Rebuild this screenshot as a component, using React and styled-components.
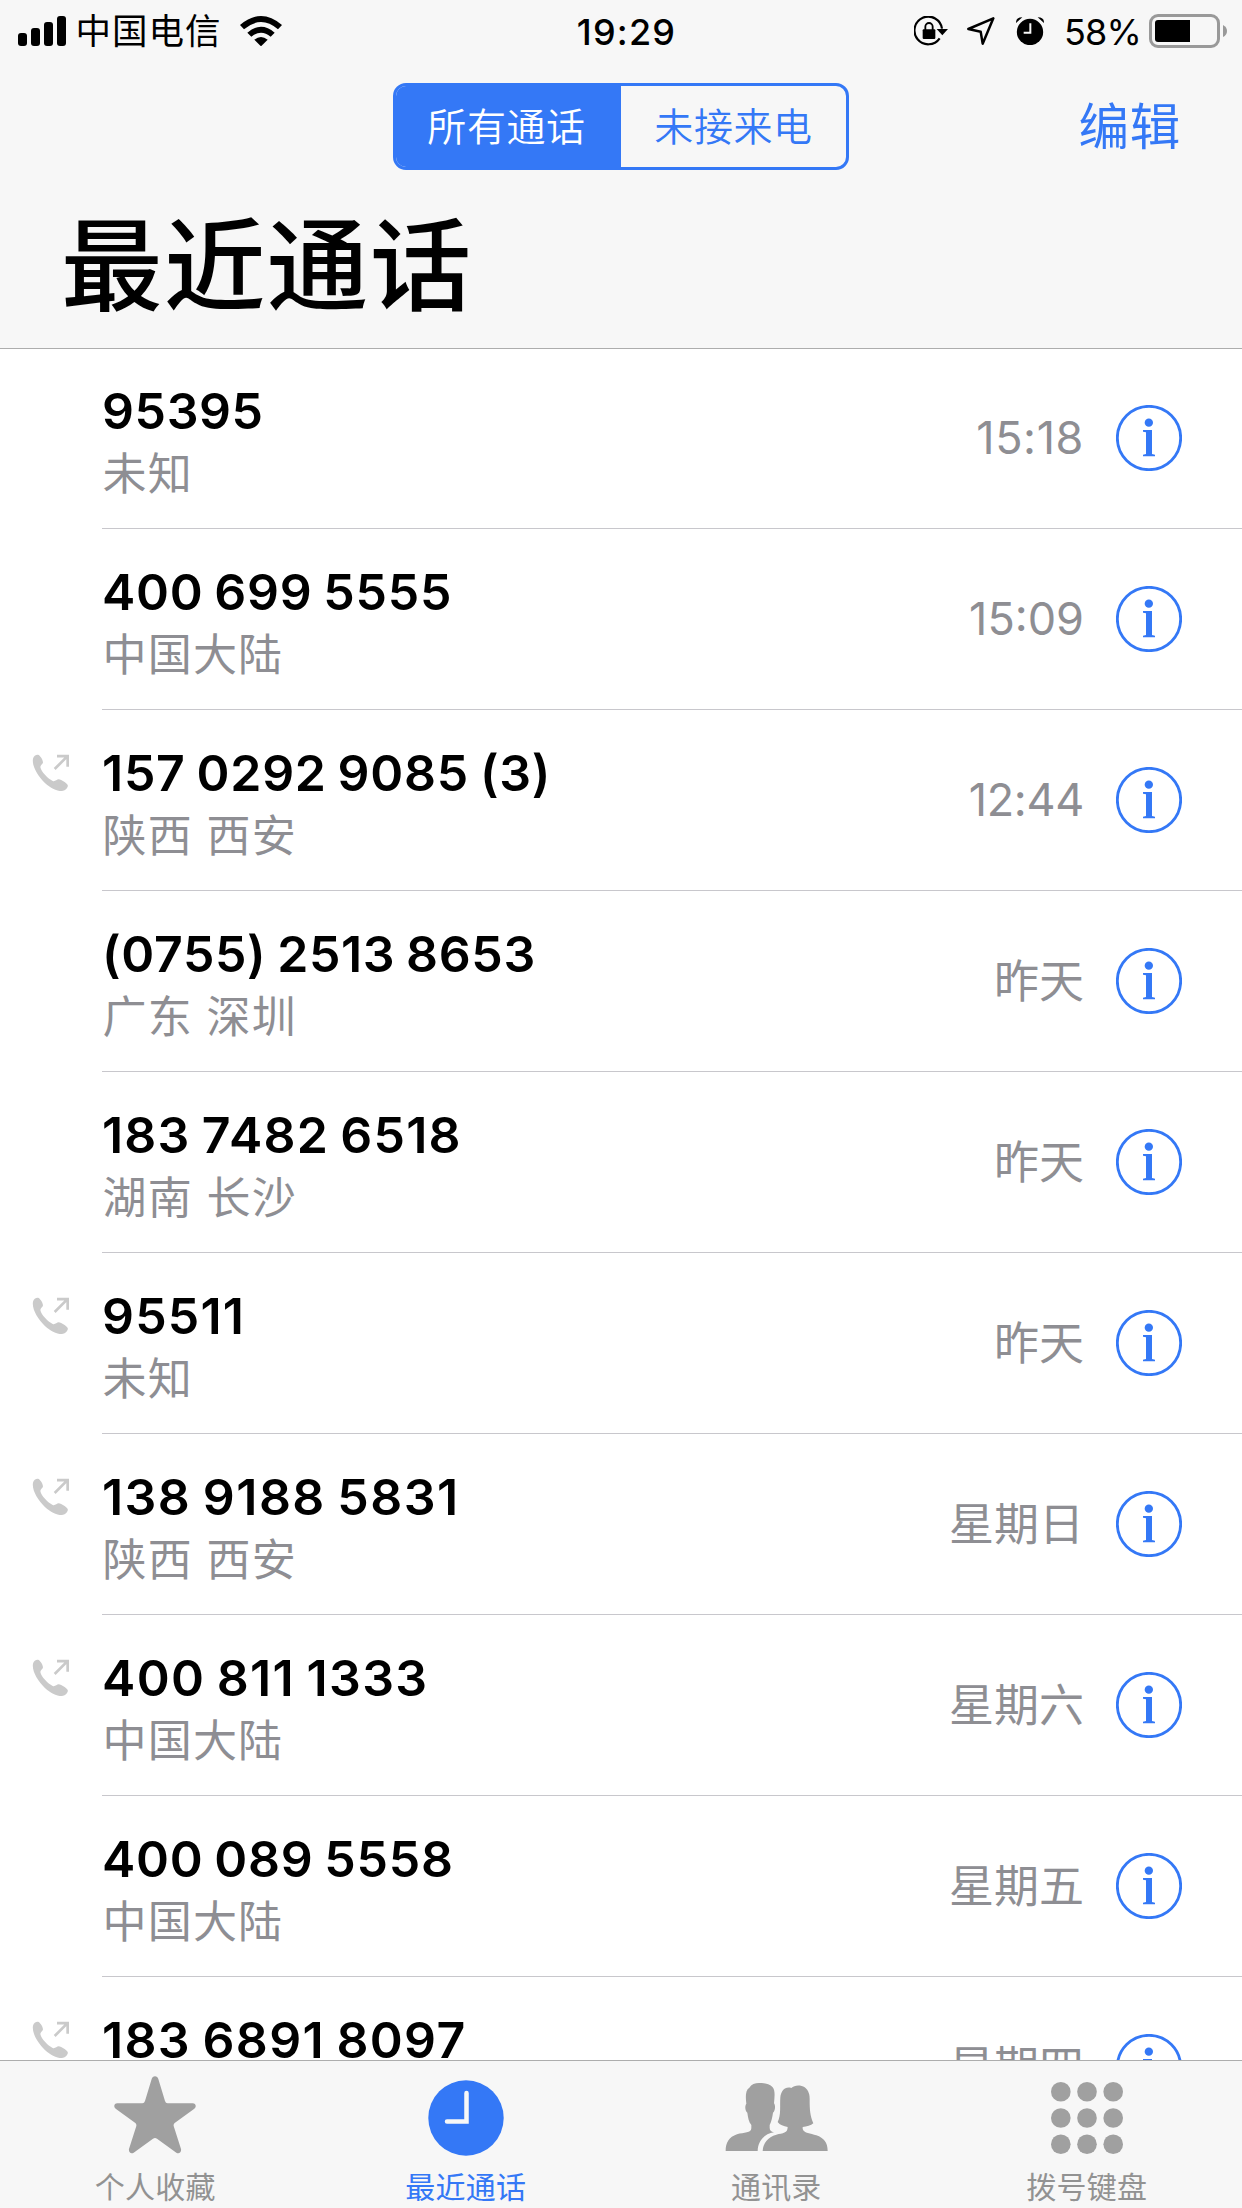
import React from "react";
import styled, { createGlobalStyle, css } from "styled-components";

const BLUE = "#3478f6";
const GREY = "#8e8e93";
const TAB_GREY = "#a0a0a0";
const BAR = "#f7f7f7";

const GlobalStyle = createGlobalStyle`
  * { box-sizing: border-box; }
  body {
    margin: 0;
    background: #fff;
    color: #000;
    font-family: Inter, "Noto Sans CJK SC", sans-serif;
  }
  svg { display: block; flex: none; }
  button {
    font: inherit;
    color: inherit;
    background: none;
    border: 0;
    padding: 0;
    margin: 0;
  }
`;

const Screen = styled.div`
  width: 1242px;
  height: 2208px;
  display: flex;
  flex-direction: column;
  overflow: hidden;
`;

const Header = styled.header`
  flex: none;
  height: 349px;
  background: ${BAR};
  border-bottom: 1px solid #adadad;
  display: flex;
  flex-direction: column;
`;

const StatusBar = styled.div`
  height: 60px;
  display: grid;
  grid-template-columns: 1fr auto 1fr;
  align-items: center;
  padding: 0 15px 0 18px;
`;

const StatusLeft = styled.div`
  display: flex;
  align-items: center;
  height: 60px;
`;

const StatusRight = styled.div`
  display: flex;
  align-items: center;
  justify-content: flex-end;
  height: 60px;
`;

const Carrier = styled.span`
  font-size: 35.5px;
  line-height: 60px;
  letter-spacing: 1px;
  margin: 2px 18.5px 0 9.5px;
`;

const Clock = styled.span`
  font-size: 36px;
  font-weight: 500;
  line-height: 60px;
  letter-spacing: 1.2px;
  margin-left: 8px;
  margin-top: 2px;
`;

const Percent = styled.span`
  font-size: 36px;
  line-height: 60px;
  letter-spacing: -0.8px;
  margin: 2px 8px 0 20px;
`;

const LocationSlot = styled.span`
  margin: 0 21px 0 19px;
`;

const NavBar = styled.nav`
  height: 132px;
  display: grid;
  grid-template-columns: 1fr auto 1fr;
  align-items: center;
  padding: 0 63px;
`;

const Segments = styled.div`
  grid-column: 2;
  width: 456px;
  height: 87px;
  display: flex;
  border: 3px solid ${BLUE};
  border-radius: 13px;
  overflow: hidden;
`;

const Segment = styled.button`
  flex: 0 0 225px;
  font-size: 39px;
  line-height: 81px;
  letter-spacing: 0.6px;
  color: ${BLUE};
  font-weight: 350;
  ${(p) =>
    p.$active &&
    css`
      padding-right: 4px;
      background: ${BLUE};
      color: #fff;
    `}
`;

const EditButton = styled.button`
  justify-self: end;
  font-size: 50.5px;
  line-height: 80px;
  letter-spacing: 0.8px;
  color: ${BLUE};
  padding-top: 2px;
  margin-right: -2px;
`;

const Title = styled.h1`
  margin: 0;
  padding: 9px 0 0 61px;
  font-size: 101.5px;
  line-height: 130px;
  letter-spacing: 1.4px;
  font-weight: 500;
`;

const CallList = styled.ul`
  flex: 1;
  min-height: 0;
  overflow: hidden;
  list-style: none;
  margin: -1px 0 0;
  padding: 0;
`;

const Row = styled.li`
  height: 181px;
  display: flex;
`;

const Gutter = styled.div`
  width: 102px;
  padding: 44px 0 0 32px;
`;

const RowBody = styled.div`
  flex: 1;
  display: flex;
  align-items: center;
  padding-right: 60px;
  border-bottom: 1px solid #c8c7cc;
`;

const Entry = styled.div`
  flex: 1;
  height: 180px;
  padding-top: 33px;
`;

const Number = styled.div`
  font-size: 50px;
  line-height: 60px;
  font-weight: 600;
  white-space: pre;
  word-spacing: -2.5px;
  letter-spacing: ${(p) => p.$track || 0}px;
`;

const Place = styled.div`
  font-size: 44px;
  line-height: 60px;
  letter-spacing: 1.2px;
  color: ${GREY};
  padding-left: 0.5px;
  margin-top: 3px;
`;

const When = styled.div`
  font-size: 45px;
  line-height: 60px;
  color: ${GREY};
  margin-right: 32px;
  padding-top: ${(p) => (p.$clock ? 0 : 2)}px;
  letter-spacing: ${(p) => p.$track || 0}px;
`;

const TabBar = styled.footer`
  flex: none;
  height: 148px;
  display: grid;
  grid-template-columns: repeat(4, 1fr);
  background: ${BAR};
  border-top: 1px solid #adadad;
`;

const Tab = styled.button`
  display: flex;
  flex-direction: column;
  align-items: center;
  color: ${(p) => (p.$active ? BLUE : TAB_GREY)};
`;

const TabIcon = styled.span`
  height: 106px;
  display: flex;
  align-items: flex-start;
  padding-top: ${(p) => p.$top}px;
`;

const TabLabel = styled.span`
  font-size: 30px;
  line-height: 40px;
  letter-spacing: 0.2px;
  color: ${(p) => (p.$active ? BLUE : "#929292")};
`;

const SignalIcon = () => (
  <svg width="48" height="30" viewBox="0 0 48 30">
    <rect x="0" y="17" width="9" height="13" rx="3" />
    <rect x="13" y="12" width="9" height="18" rx="3" />
    <rect x="26" y="6" width="9" height="24" rx="3" />
    <rect x="39" y="0" width="9" height="30" rx="3" />
  </svg>
);

const WifiIcon = () => (
  <svg width="42" height="30" viewBox="0 0 126 90">
    <path d="M0 27 Q63 -27 126 27 L114 40 Q63 -4 12 40 Z" />
    <path d="M22 50 Q63 15 104 50 L92 62 Q63 38 34 62 Z" />
    <path d="M43 71 Q63 55 83 71 L63 91 Z" />
  </svg>
);

const LockIcon = () => (
  <svg width="34" height="30" viewBox="42 30 102 90">
    <path
      d="M119 97 A41.5 41.5 0 1 1 126 68"
      fill="none"
      stroke="#000"
      strokeWidth="6.5"
    />
    <path d="M110 69 H144 L127 88 Z" />
    <rect x="68" y="70" width="38" height="29" rx="3" />
    <path
      d="M76 72 V62 a11 11 0 0 1 22 0 V72"
      fill="none"
      stroke="#000"
      strokeWidth="5.5"
    />
  </svg>
);

const LocationIcon = () => (
  <svg width="28" height="28" viewBox="202 35 84 84">
    <path
      d="M281 39 L206 71 L243 79 L249 115 Z"
      fill="none"
      stroke="#000"
      strokeWidth="7.5"
      strokeLinejoin="round"
    />
  </svg>
);

const AlarmIcon = () => (
  <svg width="28" height="28" viewBox="348 33 84 84">
    <circle cx="390" cy="78" r="39.5" />
    <path d="M348 51 Q347 34 367 34 Z M432 51 Q433 34 413 34 Z" />
    <path
      d="M391 52 V80 H371"
      fill="none"
      stroke={BAR}
      strokeWidth="6"
    />
  </svg>
);

const BatteryIcon = () => (
  <svg width="78" height="34" viewBox="0 0 78 34">
    <rect
      x="1.5"
      y="1.5"
      width="68"
      height="31"
      rx="7.5"
      fill="none"
      stroke="#999"
      strokeWidth="3"
    />
    <path d="M41 6 H9 a3 3 0 0 0 -3 3 V25 a3 3 0 0 0 3 3 H41 Z" />
    <path d="M74 11 Q78 13 78 17 Q78 21 74 23 Z" fill="#999" />
  </svg>
);

const OutgoingIcon = () => (
  <svg width="38" height="38" viewBox="37 28 114 114" fill="#cacaca">
    <path d="M40 42 C42 34 50 29 57 31 C63 35 70 46 70 53 C70 59 62 61 62 67 C65 82 84 101 99 109 C106 112 111 104 117 104 C126 106 140 114 144 121 C147 128 136 139 127 139 C110 139 90 128 75 114 C55 94 36 65 40 42 Z" />
    <path
      d="M105 73 L142 36 M112 34.500 H144 V66"
      fill="none"
      stroke="#cacaca"
      strokeWidth="8"
    />
  </svg>
);

const InfoIcon = () => (
  <svg width="66" height="66" viewBox="0 0 198 198" fill={BLUE}>
    <circle
      cx="99"
      cy="99"
      r="95"
      fill="none"
      stroke={BLUE}
      strokeWidth="8.5"
    />
    <circle cx="98.500" cy="53" r="12.500" />
    <path d="M81 75 H108 V147 L117 149 V154 H81 V149 L90 147 V82 L81 80 Z" />
  </svg>
);

const StarIcon = () => (
  <svg width="82" height="78" viewBox="27 32 246 234" fill="currentColor">
    <path d="M150 33 C155 33 158 36 160 41 L180 107 Q182 114 188 114 H263 C273 114 275 125 268 130 L209 173 Q205 176 206 182 L228 251 C230 261 222 267 214 262 L156 220 Q150 216 144 220 L86 262 C78 267 70 261 72 251 L94 182 Q95 176 91 173 L32 130 C25 125 27 114 37 114 H112 Q118 114 120 107 L140 41 C142 36 145 33 150 33 Z" />
  </svg>
);

const ClockIcon = () => (
  <svg width="76" height="76" viewBox="0 0 76 76">
    <circle cx="38" cy="38" r="37.700" fill="currentColor" />
    <path
      d="M38.500 13 V41.500 H19"
      fill="none"
      stroke={BAR}
      strokeWidth="4.500"
      strokeLinecap="round"
    />
  </svg>
);

const PeopleIcon = () => (
  <svg width="104" height="68" viewBox="30 39 312 204" fill="currentColor">
    <path d="M35 243 C35 218 45 201 69 193 C90 187 112 189 112 175 V165 C104 156 102 142 100 128 C93 123 92 108 97 101 C95 84 93 61 106 53 C112 43 123 39 135 39 C153 39 168 42 176 52 C185 63 181 84 180 100 C185 107 184 122 177 128 C175 142 172 155 167 165 V173 C167 181 171 184 180 187 C155 190 132 210 131 243 Z" />
    <path d="M146 243 C147 220 161 201 187 194 C207 189 221 190 221 171 C209 169 197 165 191 156 C202 136 197 105 199 82 C201 62 214 48 232 54 C241 45 260 44 272 52 C284 61 288 75 287 91 C287 117 288 138 298 160 C291 167 278 170 266 171 V177 C270 190 290 190 307 196 C330 204 341 218 341 243 Z" />
  </svg>
);

const KeypadIcon = () => (
  <svg width="72" height="72" viewBox="0 0 72 72" fill="currentColor">
    {[9.8, 36, 62.2].map((y) =>
      [9.8, 36, 62.2].map((x) => (
        <circle key={`${x}-${y}`} cx={x} cy={y} r="9.8" />
      ))
    )}
  </svg>
);

const calls = [
  { number: "95395", track: 0.6, place: "未知", when: "15:18", clock: true, whenTrack: 0.6 },
  { number: "400 699 5555", track: 0.74, place: "中国大陆", when: "15:09", clock: true },
  { number: "157 0292 9085 (3)", track: 0.75, place: "陕西 西安", when: "12:44", clock: true, whenTrack: -0.3, out: true },
  { number: "(0755) 2513 8653", track: 0.65, place: "广东 深圳", when: "昨天" },
  { number: "183 7482 6518", track: 1.2, place: "湖南 长沙", when: "昨天" },
  { number: "95511", track: 1.2, place: "未知", when: "昨天", out: true },
  { number: "138 9188 5831", track: 1.45, place: "陕西 西安", when: "星期日", out: true },
  { number: "400 811 1333", track: 1.35, place: "中国大陆", when: "星期六", out: true },
  { number: "400 089 5558", track: 0.74, place: "中国大陆", when: "星期五" },
  { number: "183 6891 8097", track: 1.35, place: "", when: "星期四", out: true },
];

const tabs = [
  { label: "个人收藏", icon: <StarIcon />, top: 15 },
  { label: "最近通话", icon: <ClockIcon />, top: 19, active: true },
  { label: "通讯录", icon: <PeopleIcon />, top: 22 },
  { label: "拨号键盘", icon: <KeypadIcon />, top: 21 },
];

export default function App() {
  return (
    <Screen lang="zh-CN">
      <GlobalStyle />
      <Header>
        <StatusBar>
          <StatusLeft>
            <SignalIcon />
            <Carrier>中国电信</Carrier>
            <WifiIcon />
          </StatusLeft>
          <Clock>19:29</Clock>
          <StatusRight>
            <LockIcon />
            <LocationSlot>
              <LocationIcon />
            </LocationSlot>
            <AlarmIcon />
            <Percent>58%</Percent>
            <BatteryIcon />
          </StatusRight>
        </StatusBar>
        <NavBar>
          <Segments>
            <Segment $active>所有通话</Segment>
            <Segment>未接来电</Segment>
          </Segments>
          <EditButton>编辑</EditButton>
        </NavBar>
        <Title>最近通话</Title>
      </Header>
      <CallList>
        {calls.map((call) => (
          <Row key={call.number}>
            <Gutter>{call.out && <OutgoingIcon />}</Gutter>
            <RowBody>
              <Entry>
                <Number $track={call.track}>{call.number}</Number>
                <Place>{call.place}</Place>
              </Entry>
              <When $clock={call.clock} $track={call.whenTrack}>
                {call.when}
              </When>
              <InfoIcon />
            </RowBody>
          </Row>
        ))}
      </CallList>
      <TabBar>
        {tabs.map((tab) => (
          <Tab key={tab.label} $active={tab.active}>
            <TabIcon $top={tab.top}>{tab.icon}</TabIcon>
            <TabLabel $active={tab.active}>{tab.label}</TabLabel>
          </Tab>
        ))}
      </TabBar>
    </Screen>
  );
}
